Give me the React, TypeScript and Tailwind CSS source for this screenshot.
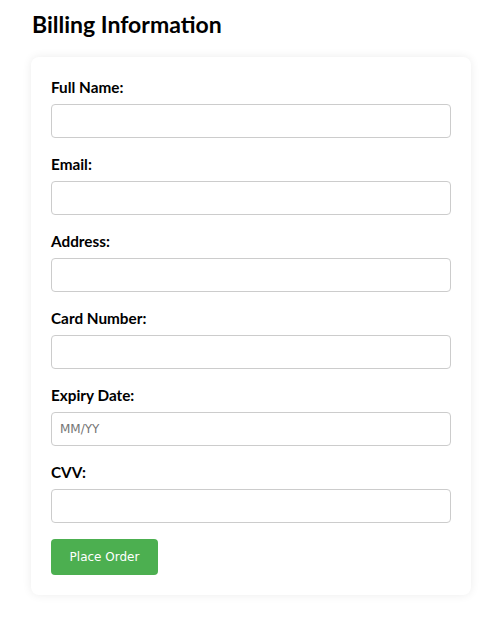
const fields = [
  { label: 'Full Name:', placeholder: '' },
  { label: 'Email:', placeholder: '' },
  { label: 'Address:', placeholder: '' },
  { label: 'Card Number:', placeholder: '' },
  { label: 'Expiry Date:', placeholder: 'MM/YY' },
  { label: 'CVV:', placeholder: '' },
];

export default function App() {
  return (
    <div className="min-h-[623px] w-[492px] bg-white px-[31px] pt-[8px]">
      <h2 className="mb-[17px] pl-[1px] font-['Lato',sans-serif] text-[23px] leading-[32px] font-bold text-black">
        Billing Information
      </h2>

      <form
        className="flex w-[440px] flex-col rounded-[8px] bg-white p-[20px] shadow-[0_0_10px_rgba(0,0,0,0.08)]"
        onSubmit={(e) => e.preventDefault()}
      >
        {fields.map((f) => (
          <div key={f.label} className="mb-[16px] flex flex-col">
            <label className="mb-[7px] font-['Lato',sans-serif] text-[15.3px] leading-[20px] font-bold text-black">
              {f.label}
            </label>
            <input
              type="text"
              placeholder={f.placeholder}
              className="h-[34px] w-[400px] rounded-[4px] border border-[#cccccc] px-[8px] font-['DejaVu_Sans',sans-serif] text-[12px] text-black placeholder:text-[#757575] outline-none"
            />
          </div>
        ))}

        <button
          type="submit"
          className="h-[36px] w-[107px] rounded-[4px] bg-[#4caf50] font-['DejaVu_Sans',sans-serif] text-[12px] text-white"
        >
          Place Order
        </button>
      </form>
    </div>
  );
}
